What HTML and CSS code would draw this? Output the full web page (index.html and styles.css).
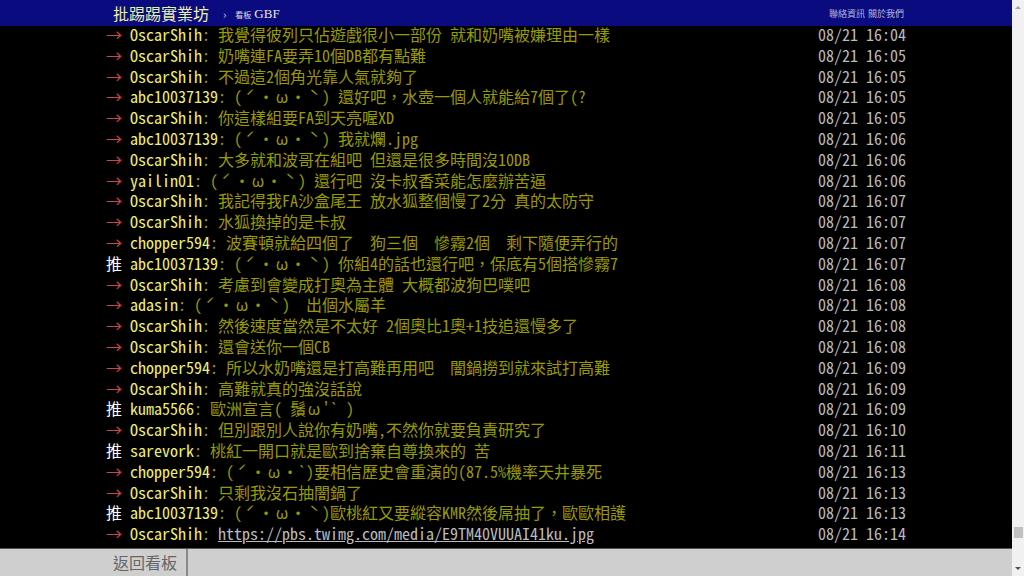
FILE: index.html
```html
<!DOCTYPE html>
<html lang="zh-Hant">
<head>
<meta charset="utf-8">
<title>GBF - 批踢踢實業坊</title>
<link rel="stylesheet" href="styles.css">
</head>
<body>
<div class="frame">
  <div class="page">
    <header class="topbar">
      <div class="topbar-inner">
        <a class="logo">批踢踢實業坊</a>
        <span class="sep">›</span>
        <span class="board-label">看板</span>
        <span class="board-name">GBF</span>
        <span class="spacer"></span>
        <a class="toplink">聯絡資訊</a>
        <a class="toplink">關於我們</a>
      </div>
    </header>
    <main class="content">
      <div class="pushes">
        <div class="push"><span class="tag arrow">→</span><span class="uid">OscarShih</span><span class="msg">: 我覺得彼列只佔遊戲很小一部份 就和奶嘴被嫌理由一樣</span><span class="time">08/21 16:04</span></div>
        <div class="push"><span class="tag arrow">→</span><span class="uid">OscarShih</span><span class="msg">: 奶嘴連FA要弄10個DB都有點難</span><span class="time">08/21 16:05</span></div>
        <div class="push"><span class="tag arrow">→</span><span class="uid">OscarShih</span><span class="msg">: 不過這2個角光靠人氣就夠了</span><span class="time">08/21 16:05</span></div>
        <div class="push"><span class="tag arrow">→</span><span class="uid">abc10037139</span><span class="msg">: (<span class="fw">ˊ</span>・<span class="fw">ω</span>・<span class="fw">ˋ</span>) 還好吧，水壺一個人就能給7個了(?</span><span class="time">08/21 16:05</span></div>
        <div class="push"><span class="tag arrow">→</span><span class="uid">OscarShih</span><span class="msg">: 你這樣組要FA到天亮喔XD</span><span class="time">08/21 16:05</span></div>
        <div class="push"><span class="tag arrow">→</span><span class="uid">abc10037139</span><span class="msg">: (<span class="fw">ˊ</span>・<span class="fw">ω</span>・<span class="fw">ˋ</span>) 我就爛.jpg</span><span class="time">08/21 16:06</span></div>
        <div class="push"><span class="tag arrow">→</span><span class="uid">OscarShih</span><span class="msg">: 大多就和波哥在組吧 但還是很多時間沒10DB</span><span class="time">08/21 16:06</span></div>
        <div class="push"><span class="tag arrow">→</span><span class="uid">yailin01</span><span class="msg">: (<span class="fw">ˊ</span>・<span class="fw">ω</span>・<span class="fw">ˋ</span>) 還行吧 沒卡叔香菜能怎麼辦苦逼</span><span class="time">08/21 16:06</span></div>
        <div class="push"><span class="tag arrow">→</span><span class="uid">OscarShih</span><span class="msg">: 我記得我FA沙盒尾王 放水狐整個慢了2分 真的太防守</span><span class="time">08/21 16:07</span></div>
        <div class="push"><span class="tag arrow">→</span><span class="uid">OscarShih</span><span class="msg">: 水狐換掉的是卡叔</span><span class="time">08/21 16:07</span></div>
        <div class="push"><span class="tag arrow">→</span><span class="uid">chopper594</span><span class="msg">: 波賽頓就給四個了　狗三個　慘霧2個　剩下隨便弄行的</span><span class="time">08/21 16:07</span></div>
        <div class="push"><span class="tag push-good">推</span><span class="uid">abc10037139</span><span class="msg">: (<span class="fw">ˊ</span>・<span class="fw">ω</span>・<span class="fw">ˋ</span>) 你組4的話也還行吧，保底有5個搭慘霧7</span><span class="time">08/21 16:07</span></div>
        <div class="push"><span class="tag arrow">→</span><span class="uid">OscarShih</span><span class="msg">: 考慮到會變成打奧為主體 大概都波狗巴噗吧</span><span class="time">08/21 16:08</span></div>
        <div class="push"><span class="tag arrow">→</span><span class="uid">adasin</span><span class="msg">: (<span class="fw">ˊ</span>・<span class="fw">ω</span>・<span class="fw">ˋ</span>)　出個水屬羊</span><span class="time">08/21 16:08</span></div>
        <div class="push"><span class="tag arrow">→</span><span class="uid">OscarShih</span><span class="msg">: 然後速度當然是不太好 2個奧比1奧+1技追還慢多了</span><span class="time">08/21 16:08</span></div>
        <div class="push"><span class="tag arrow">→</span><span class="uid">OscarShih</span><span class="msg">: 還會送你一個CB</span><span class="time">08/21 16:08</span></div>
        <div class="push"><span class="tag arrow">→</span><span class="uid">chopper594</span><span class="msg">: 所以水奶嘴還是打高難再用吧　闇鍋撈到就來試打高難</span><span class="time">08/21 16:09</span></div>
        <div class="push"><span class="tag arrow">→</span><span class="uid">OscarShih</span><span class="msg">: 高難就真的強沒話說</span><span class="time">08/21 16:09</span></div>
        <div class="push"><span class="tag push-good">推</span><span class="uid">kuma5566</span><span class="msg">: 歐洲宣言( 鬚<span class="fw">ω</span>'` )</span><span class="time">08/21 16:09</span></div>
        <div class="push"><span class="tag arrow">→</span><span class="uid">OscarShih</span><span class="msg">: 但別跟別人說你有奶嘴,不然你就要負責研究了</span><span class="time">08/21 16:10</span></div>
        <div class="push"><span class="tag push-good">推</span><span class="uid">sarevork</span><span class="msg">: 桃紅一開口就是歐到捨棄自尊換來的 苦</span><span class="time">08/21 16:11</span></div>
        <div class="push"><span class="tag arrow">→</span><span class="uid">chopper594</span><span class="msg">: (<span class="fw">ˊ</span>・<span class="fw">ω</span>・`)要相信歷史會重演的(87.5%機率天井暴死</span><span class="time">08/21 16:13</span></div>
        <div class="push"><span class="tag arrow">→</span><span class="uid">OscarShih</span><span class="msg">: 只剩我沒石抽闇鍋了</span><span class="time">08/21 16:13</span></div>
        <div class="push"><span class="tag push-good">推</span><span class="uid">abc10037139</span><span class="msg">: (<span class="fw">ˊ</span>・<span class="fw">ω</span>・<span class="fw">ˋ</span>)歐桃紅又要縱容KMR然後屌抽了，歐歐相護</span><span class="time">08/21 16:13</span></div>
        <div class="push"><span class="tag arrow">→</span><span class="uid">OscarShih</span><span class="msg">: <a class="link">https://pbs.twimg.com/media/E9TM40VUUAI41ku.jpg</a></span><span class="time">08/21 16:14</span></div>
      </div>
    </main>
    <footer class="bottombar">
      <div class="bottombar-inner">
        <a class="back">返回看板</a>
        <span class="divider"></span>
      </div>
    </footer>
  </div>
  <div class="scrollbar">
    <span class="sb-up"></span>
    <span class="sb-track"><span class="sb-thumb"></span></span>
    <span class="sb-down"></span>
  </div>
</div>
</body>
</html>
```

FILE: styles.css
```css
* { box-sizing: border-box; }
html, body { margin: 0; padding: 0; }
body {
  width: 1024px;
  height: 576px;
  overflow: hidden;
  background: #000;
  font-family: "Noto Sans Mono CJK TC", "Liberation Mono", "Noto Sans CJK TC", monospace;
}
.frame {
  display: flex;
  width: 1024px;
  height: 576px;
}
.page {
  flex: 1;
  display: flex;
  flex-direction: column;
  background: #000;
}
.topbar {
  height: 26px;
  background: #0b0b80;
  flex: none;
}
.topbar-inner {
  width: 800px;
  margin: 0 auto;
  padding-left: 7px;
  height: 26px;
  display: flex;
  align-items: center;
}
.logo {
  color: #eeeea6;
  font-size: 16px;
  font-family: "Noto Sans CJK TC", sans-serif;
}
.sep {
  color: #ccc;
  font-size: 11px;
  margin: 2px 9px 0 14px;
}
.board-label {
  color: #ddd;
  font-size: 8px;
  margin-top: 2px;
  font-family: "Noto Sans CJK TC", sans-serif;
}
.board-name {
  color: #e6e6e6;
  font-size: 13px;
  margin-left: 3px;
  margin-top: 1px;
  font-family: "Liberation Serif", serif;
}
.spacer { flex: 1; }
.toplink {
  color: #b4b4d8;
  font-size: 9px;
  font-family: "Noto Sans CJK TC", sans-serif;
  margin-left: 3px;
  margin-top: 1px;
}
.toplink:last-child { margin-right: 2px; }
.content {
  flex: 1;
  overflow: hidden;
}
.pushes {
  width: 800px;
  margin: 0 auto;
}
.push {
  display: flex;
  align-items: flex-start;
  height: 20.8px;
  line-height: 16.8px;
  font-size: 16px;
  white-space: pre;
}
.tag {
  width: 24px;
  flex: none;
}
.fw {
  display: inline-block;
  width: 16px;
  text-align: center;
}
.arrow { color: #d04444; }
.push-good { color: #fff; }
.uid { color: #f0f070; }
.msg { color: #999900; flex: 1; }
.time { color: #bbb; flex: none; }
.link { color: #bbb; text-decoration: underline; }
.bottombar {
  height: 28px;
  flex: none;
  background: #cfcfcf;
  border-top: 1px solid #555;
}
.bottombar-inner {
  width: 800px;
  margin: 0 auto;
  height: 27px;
  display: flex;
  align-items: stretch;
}
.back {
  color: #666;
  font-size: 16px;
  font-family: "Noto Sans CJK TC", sans-serif;
  padding-left: 7px;
  padding-bottom: 2px;
  width: 80px;
  display: flex;
  align-items: center;
}
.divider {
  width: 2px;
  background: #8a8a8a;
}
.scrollbar {
  width: 12px;
  flex: none;
  background: #f1f1f1;
  display: flex;
  flex-direction: column;
  align-items: center;
}
.sb-up, .sb-down {
  width: 0;
  height: 0;
  border-left: 3px solid transparent;
  border-right: 3px solid transparent;
  margin: 6px 0;
}
.sb-up { border-bottom: 3px solid #a3a3a3; }
.sb-down { border-top: 3px solid #505050; }
.sb-track {
  flex: 1;
  width: 100%;
  display: flex;
  flex-direction: column;
  justify-content: flex-end;
  align-items: center;
  padding-bottom: 23px;
}
.sb-thumb {
  width: 9px;
  height: 11px;
  background: #c1c1c1;
}
```
